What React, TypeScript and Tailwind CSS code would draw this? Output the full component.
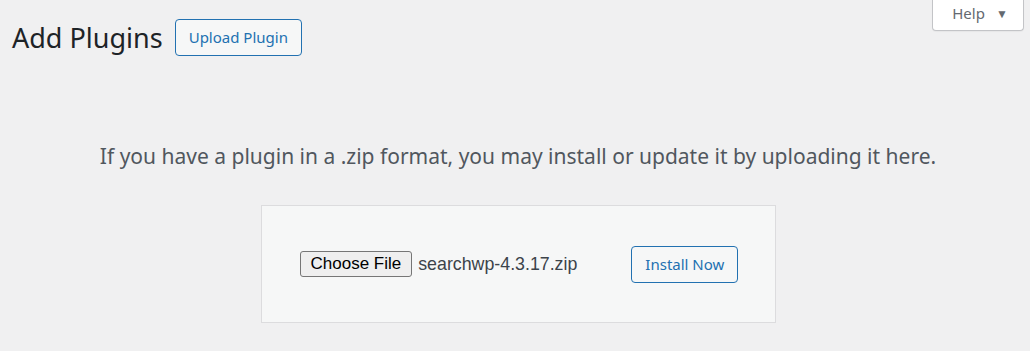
export default function App() {
  return (
    <div className="relative h-[351px] w-[1030px] overflow-hidden bg-[#f0f0f1] font-['Noto_Sans',sans-serif] text-[#1d2327]">
      {/* help tab */}
      <div className="absolute right-[6px] top-0">
        <button className="flex h-[31px] w-[92px] items-center justify-center gap-[11px] rounded-b-[4px] border border-t-0 border-[#c3c4c7] bg-white pb-[3px] pl-[4px] text-[15px] text-[#646970] shadow-[0_1px_1px_rgba(0,0,0,0.04)]">
          <span>Help</span>
          <span className="text-[12px]">▼</span>
        </button>
      </div>

      <div className="pl-[12px] pr-[6px]">
        <div className="flex items-center gap-[12px] pt-[19px]">
          <h1 className="text-[27px] leading-[37px] font-normal">Add Plugins</h1>
          <button className="h-[37px] rounded-[4px] border border-[#2271b1] bg-[#f6f7f7] px-[13px] text-[15px] text-[#2271b1]">
            Upload Plugin
          </button>
        </div>

        <p className="mt-[86px] text-center text-[21px] leading-[28px] text-[#50575e]">
          If you have a plugin in a .zip format, you may install or update it by uploading it here.
        </p>

        <div className="mx-auto mt-[35px] flex h-[118px] w-[515px] items-center border border-[#dcdcde] bg-[#f6f7f7] pl-[38px]">
          <div className="flex items-center font-['Liberation_Sans',sans-serif]">
            <button className="h-[26px] rounded-[3px] border border-[#767676] bg-[#efefef] px-[10px] text-[17px] leading-[22px] text-black">
              Choose File
            </button>
            <span className="ml-[6px] text-[17.8px] text-[#3c434a]">searchwp-4.3.17.zip</span>
          </div>
          <button className="ml-[54px] h-[37px] rounded-[4px] border border-[#2271b1] bg-[#f6f7f7] px-[13px] text-[15px] text-[#2271b1]">
            Install Now
          </button>
        </div>
      </div>
    </div>
  );
}
